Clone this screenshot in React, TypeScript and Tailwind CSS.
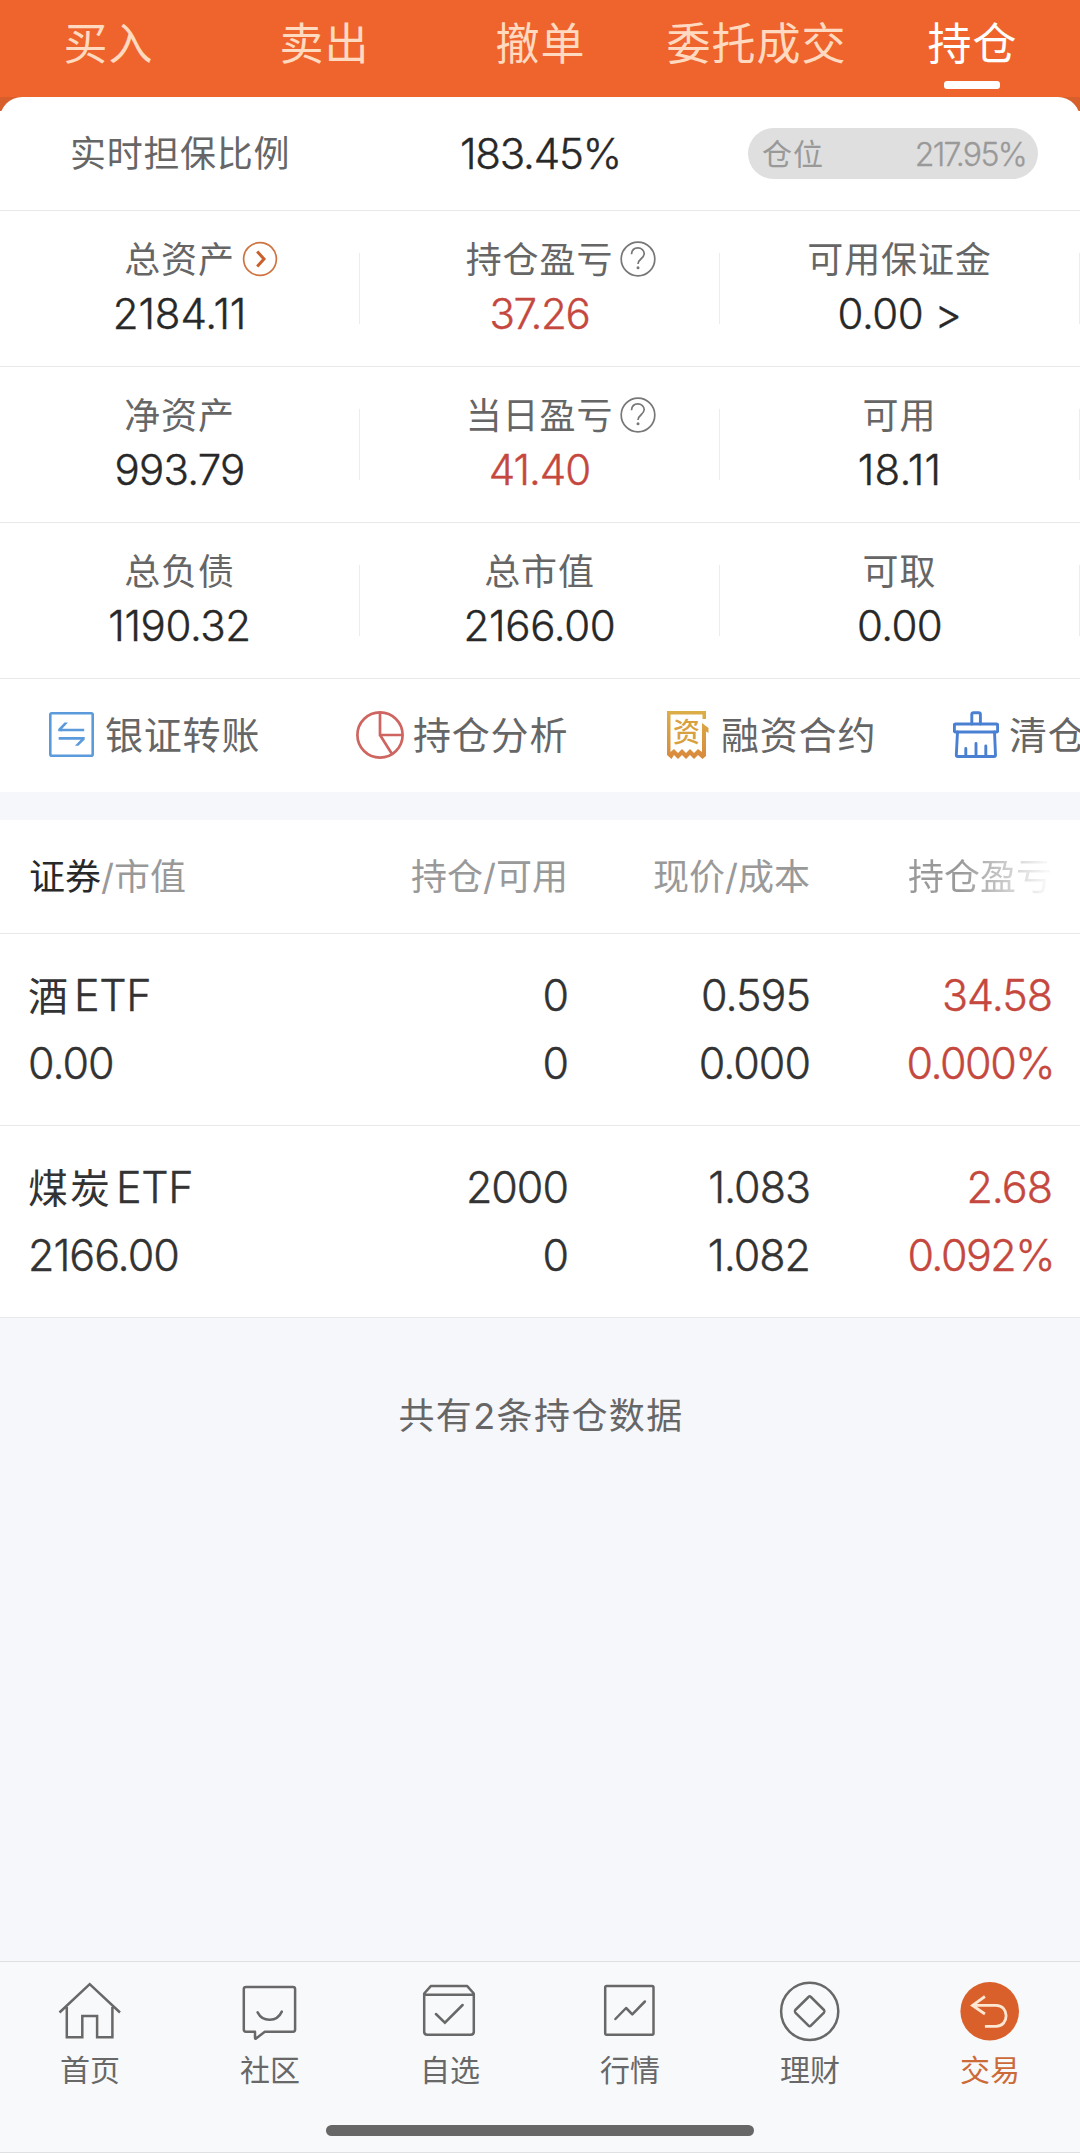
import React from 'react';

const tabs = ['买入', '卖出', '撤单', '委托成交', '持仓'];

type Stat = { label: string; value: string; red?: boolean; icon?: 'go' | 'help'; tracking: string };

const stats: Stat[][] = [
  [
    { label: '总资产', value: '2184.11', icon: 'go', tracking: 'tracking-[-0.1px]' },
    { label: '持仓盈亏', value: '37.26', red: true, icon: 'help', tracking: 'tracking-[-1.3px]' },
    { label: '可用保证金', value: '0.00 >', tracking: 'tracking-[-0.5px]' },
  ],
  [
    { label: '净资产', value: '993.79', tracking: 'tracking-[-0.8px]' },
    { label: '当日盈亏', value: '41.40', red: true, icon: 'help', tracking: 'tracking-[-1.0px]' },
    { label: '可用', value: '18.11', tracking: 'tracking-[0.2px]' },
  ],
  [
    { label: '总负债', value: '1190.32', tracking: 'tracking-[-0.4px]' },
    { label: '总市值', value: '2166.00', tracking: 'tracking-[-0.3px]' },
    { label: '可取', value: '0.00', tracking: 'tracking-[-0.6px]' },
  ],
];

const holdings = [
  { name: '酒', value: '0.00', qty: '0', avail: '0', price: '0.595', cost: '0.000', profit: '34.58', rate: '0.000%' },
  { name: '煤炭', value: '2166.00', qty: '2000', avail: '0', price: '1.083', cost: '1.082', profit: '2.68', rate: '0.092%' },
];

function GoIcon() {
  return (
    <svg viewBox="0 0 36 36" className="size-9" fill="none" stroke="#cf7440">
      <circle cx="18" cy="18" r="16.4" strokeWidth="1.7" />
      <path d="M15.2 10.5 22 18l-6.8 7.5" strokeWidth="3" stroke="#c9602c" />
    </svg>
  );
}

function HelpIcon() {
  return (
    <svg viewBox="0 0 36 36" className="size-9" fill="none" stroke="#777" strokeWidth="1.7">
      <circle cx="18" cy="18" r="16.8" />
      <path d="M11.5 13.2c.3-3.9 2.900-6.300 6.400-6.300s6.300 2.400 6.300 5.700c0 5.100-6.200 5.200-6.200 10.400" />
      <circle cx="18" cy="26.800" r="1.500" fill="#777" stroke="none" />
    </svg>
  );
}

function TransferIcon() {
  return (
    <svg viewBox="0 0 45 45" className="size-[45px]" fill="none" stroke="#5b9bdc" strokeWidth="2.6">
      <rect x="1.3" y="1.3" width="42.400" height="42.400" rx="1.5" />
      <path d="M35.200 18H11.500M33.500 26.400H9.700" strokeWidth="2.7" />
      <path d="M9.200 19.300V17L15.500 10.600H19L13 17V19.300ZM35.700 25.100V27.400L29.400 33.800H25.900L31.900 27.400V25.100Z" fill="#5b9bdc" stroke="none" />
    </svg>
  );
}

function PieIcon() {
  return (
    <svg viewBox="0 0 48 48" className="size-12" fill="none" stroke="#cf6560" strokeWidth="2.700">
      <circle cx="24" cy="24" r="22.600" />
      <path d="M24 1.500V24H46.500M24 24 36 43" />
    </svg>
  );
}

function ContractIcon() {
  return (
    <svg viewBox="0 0 42 48" className="h-12 w-[42px]" fill="none">
      <defs>
        <linearGradient id="gold" x1="0" y1="0" x2="0" y2="48" gradientUnits="userSpaceOnUse">
          <stop stopColor="#dcae48" />
          <stop offset="1" stopColor="#d9893c" />
        </linearGradient>
      </defs>
      <path
        fill="url(#gold)"
        d="M0 0H39V8H35.500V3.500H3.500V41L7 38l4 4 4-4 4 4 4-4 4 4 4-4 4 3V12L41.500 17V22L39 20.500V45L35.500 48 31 44 27 48 23 44 19 48 15 44 11 48 7 44 4.500 48 0 44Z"
      />
      <text x="19.500" y="31" textAnchor="middle" fontSize="27" fontWeight="500" fill="#d9a040" fontFamily='"Noto Sans CJK SC", sans-serif'>
        资
      </text>
    </svg>
  );
}

function BrushIcon() {
  return (
    <svg viewBox="0 0 46 47" className="h-[47px] w-[46px]" fill="none" stroke="#4a80d2" strokeWidth="2.900" strokeLinejoin="round" strokeLinecap="round">
      <path d="M18.800 13V3.500q0-1.800 1.800-1.800h5q1.800 0 1.800 1.800V13" />
      <rect x="1.400" y="13" width="43.200" height="8" rx="1" />
      <path d="M4.500 21 3.300 44q0 1.500 1.500 1.500H41q1.500 0 1.500-1.500L41.500 21M12.800 37.500V44M23 32.500V44M32.800 35V44" />
    </svg>
  );
}

function NavIcon({ name }: { name: string }) {
  return (
    <svg viewBox="0 0 64 64" className="size-16" fill="none" stroke="#686868" strokeWidth="2.500" strokeLinejoin="round">
      {name === '首页' && (
        <path strokeLinejoin="miter" d="M1.500 32.500 31.700 4.200 62 32.500M8.800 27V57.300H24.300V36H39.100V57.300H54.400V27" />
      )}
      {name === '社区' && (
        <path
          strokeLinecap="round"
          d="M8 7H55q2.100 0 2.100 2.100V49.600q0 2.100-2.100 2.100H26.800L18 58.600q-1 .5-1-1V51.700H8q-2.200 0-2.200-2.100V9.100Q5.800 7 8 7ZM19.600 32.400c5.200 10 19.200 10 24.200-.800"
        />
      )}
      {name === '自选' && (
        <>
          <path d="M6.200 13.500 13 5.900H49L55.800 13.500V51.700q0 3-3 3H9.200q-3 0-3-3ZM6.200 14.700H55.800" />
          <path strokeLinecap="round" strokeLinejoin="miter" d="M17.900 34 26.900 42.700 44.600 25" />
        </>
      )}
      {name === '行情' && (
        <>
          <rect x="7.200" y="6" width="48.300" height="48.700" rx="1.500" />
          <path strokeLinecap="round" d="M17.400 39 28.100 28 34.300 34.300 46.900 21.500" />
        </>
      )}
      {name === '理财' && (
        <>
          <circle cx="31.700" cy="31.300" r="28.600" />
          <path d="M30.500 17q1.200-1.300 2.400 0L46 30q1.100 1.300 0 2.600L32.900 45.700q-1.200 1.300-2.400 0L17.300 32.600q-1.100-1.300 0-2.600Z" />
        </>
      )}
      {name === '交易' && (
        <>
          <circle cx="31.700" cy="31.300" r="29.300" fill="#d9602a" stroke="none" />
          <path stroke="#fde6d2" strokeLinejoin="miter" strokeWidth="2.800" d="M26.900 16.500 14.500 25.400 26.900 34M15 25.400H38c13.500 0 13.500 20.900 0 20.900H26.900" />
        </>
      )}
    </svg>
  );
}

const actions = [
  { label: '银证转账', icon: <TransferIcon />, box: 'ml-[49px] gap-[11px] w-[307px]' },
  { label: '持仓分析', icon: <PieIcon />, box: 'gap-[9px] w-[311px]' },
  { label: '融资合约', icon: <ContractIcon />, box: 'gap-[12px] w-[286px]' },
  { label: '清仓', icon: <BrushIcon />, box: 'gap-2.5' },
];

export default function App() {
  return (
    <div className="flex h-[2153px] w-[1080px] flex-col overflow-hidden bg-[#f6f7fa] font-['Inter','Noto_Sans_CJK_SC',sans-serif] text-[#282828]">
      <nav className="grid h-[97px] shrink-0 grid-cols-5 bg-[#ee642c]">
        {tabs.map((tab, i) => (
          <div key={tab} className="flex flex-col items-center pt-3.5">
            <span className={`h-[60px] pl-px text-[44px] leading-[60px] tracking-[1px] ${i === 4 ? 'text-white' : 'text-[#ffd9c0]'}`}>{tab}</span>
            {i === 4 && <span className="mt-[7px] h-2 w-14 rounded-[3px] bg-white" />}
          </div>
        ))}
      </nav>

      <div className="shrink-0 bg-linear-to-b from-[#d65f2c] from-[14px] to-white to-[14px]">
        <section className="flex h-[114px] items-center rounded-t-[22px] border-b border-[#e9e9e9] bg-white pr-[42px] pl-[70px]">
          <span className="w-[390px] text-[36px] leading-[50px] tracking-[0.7px] text-[#666]">实时担保比例</span>
          <span className="text-[42px] leading-[50px] font-light tracking-[-1.2px] [-webkit-text-stroke:0.4px]">183.45%</span>
          <div className="ml-auto flex h-[51px] w-[290px] items-center justify-between rounded-full bg-[#dfdfdf] pr-3 pl-3.5 text-[30px] text-[#999]">
            <span className="pt-px tracking-[1px]">仓位</span>
            <span className="pt-0.5 text-[32px] font-light tracking-[-1.7px] [-webkit-text-stroke:0.3px]">217.95%</span>
          </div>
        </section>
      </div>

      {stats.map((row, r) => (
        <section key={r} className="grid h-[156px] shrink-0 grid-cols-3 border-b border-[#e9e9e9] bg-white">
          {row.map((s) => (
            <div key={s.label} className="flex items-center">
              <div className="flex h-full flex-1 flex-col items-center pt-6">
                <span className="relative h-[50px] text-[36px] leading-[50px] tracking-[0.9px] text-[#666]">
                  {s.label}
                  {s.icon && (
                    <span className="absolute top-[6px] left-full ml-[7px]">{s.icon === 'go' ? <GoIcon /> : <HelpIcon />}</span>
                  )}
                </span>
                <span
                  className={`mt-1 h-[50px] text-[42px] leading-[50px] font-light [-webkit-text-stroke:0.4px] ${s.tracking} ${s.red ? 'text-[#c5483f]' : ''}`}
                >
                  {s.value}
                </span>
              </div>
              <div className="h-[71px] w-px bg-[#ececec]" />
            </div>
          ))}
        </section>
      ))}

      <section className="flex h-[113px] shrink-0 items-center overflow-hidden bg-white pb-0.5">
        {actions.map((a) => (
          <div key={a.label} className={`flex shrink-0 items-center ${a.box}`}>
            {a.icon}
            <span className="whitespace-nowrap text-[38px] leading-[50px] tracking-[0.8px] text-[#666]">{a.label}</span>
          </div>
        ))}
      </section>

      <section className="mt-7 shrink-0 bg-white">
        <div className="grid h-[114px] grid-cols-[297px_242px_242px_242px] items-center border-b border-[#e9e9e9] pt-px pl-[29px] text-right text-[36px] leading-[50px] text-[#999]">
          <span className="text-left">
            <span className="text-[#282828]">证券</span>/市值
          </span>
          <span>持仓/可用</span>
          <span>现价/成本</span>
          <span className="bg-linear-to-r from-[#999] from-62% to-[#99999910] to-98% bg-clip-text text-transparent">持仓盈亏</span>
        </div>
        {holdings.map((h) => (
          <div
            key={h.name}
            className="grid h-[192px] grid-cols-[298px_242px_242px_242px] content-start border-b border-[#e9e9e9] pt-[27px] pl-[28px] text-right text-[43px] leading-[68px] font-light tracking-[-1px] text-[#333] [-webkit-text-stroke:0.4px]"
          >
            <span className="text-left">
              <span className="text-[40px] leading-none font-normal tracking-[2px] [-webkit-text-stroke:0]">{h.name}</span>
              <span className="ml-1 tracking-[-0.3px]">ETF</span>
            </span>
            <span>{h.qty}</span>
            <span>{h.price}</span>
            <span className="text-[#c5483f]">{h.profit}</span>
            <span className="text-left">{h.value}</span>
            <span>{h.avail}</span>
            <span>{h.cost}</span>
            <span className="-mr-0.5 tracking-[-1.5px] text-[#c5483f]">{h.rate}</span>
          </div>
        ))}
      </section>

      <p className="mt-[73px] pl-0.5 text-center text-[36px] leading-[50px] tracking-[1.400px] text-[#666]">共有2条持仓数据</p>

      <footer className="mt-auto flex h-[192px] shrink-0 flex-col border-t border-b border-[#dfe0e2] bg-[#f8f9fb]">
        <div className="grid grid-cols-6 pt-[18px]">
          {['首页', '社区', '自选', '行情', '理财', '交易'].map((n) => (
            <div key={n} className="flex flex-col items-center">
              <NavIcon name={n} />
              <span className={`mt-[6px] text-[30px] leading-[40px] ${n === '交易' ? 'text-[#cc6a38]' : 'text-[#686868]'}`}>{n}</span>
            </div>
          ))}
        </div>
        <div className="mx-auto mt-auto mb-4 h-[11px] w-[428px] rounded-full bg-[#676767]" />
      </footer>
    </div>
  );
}
